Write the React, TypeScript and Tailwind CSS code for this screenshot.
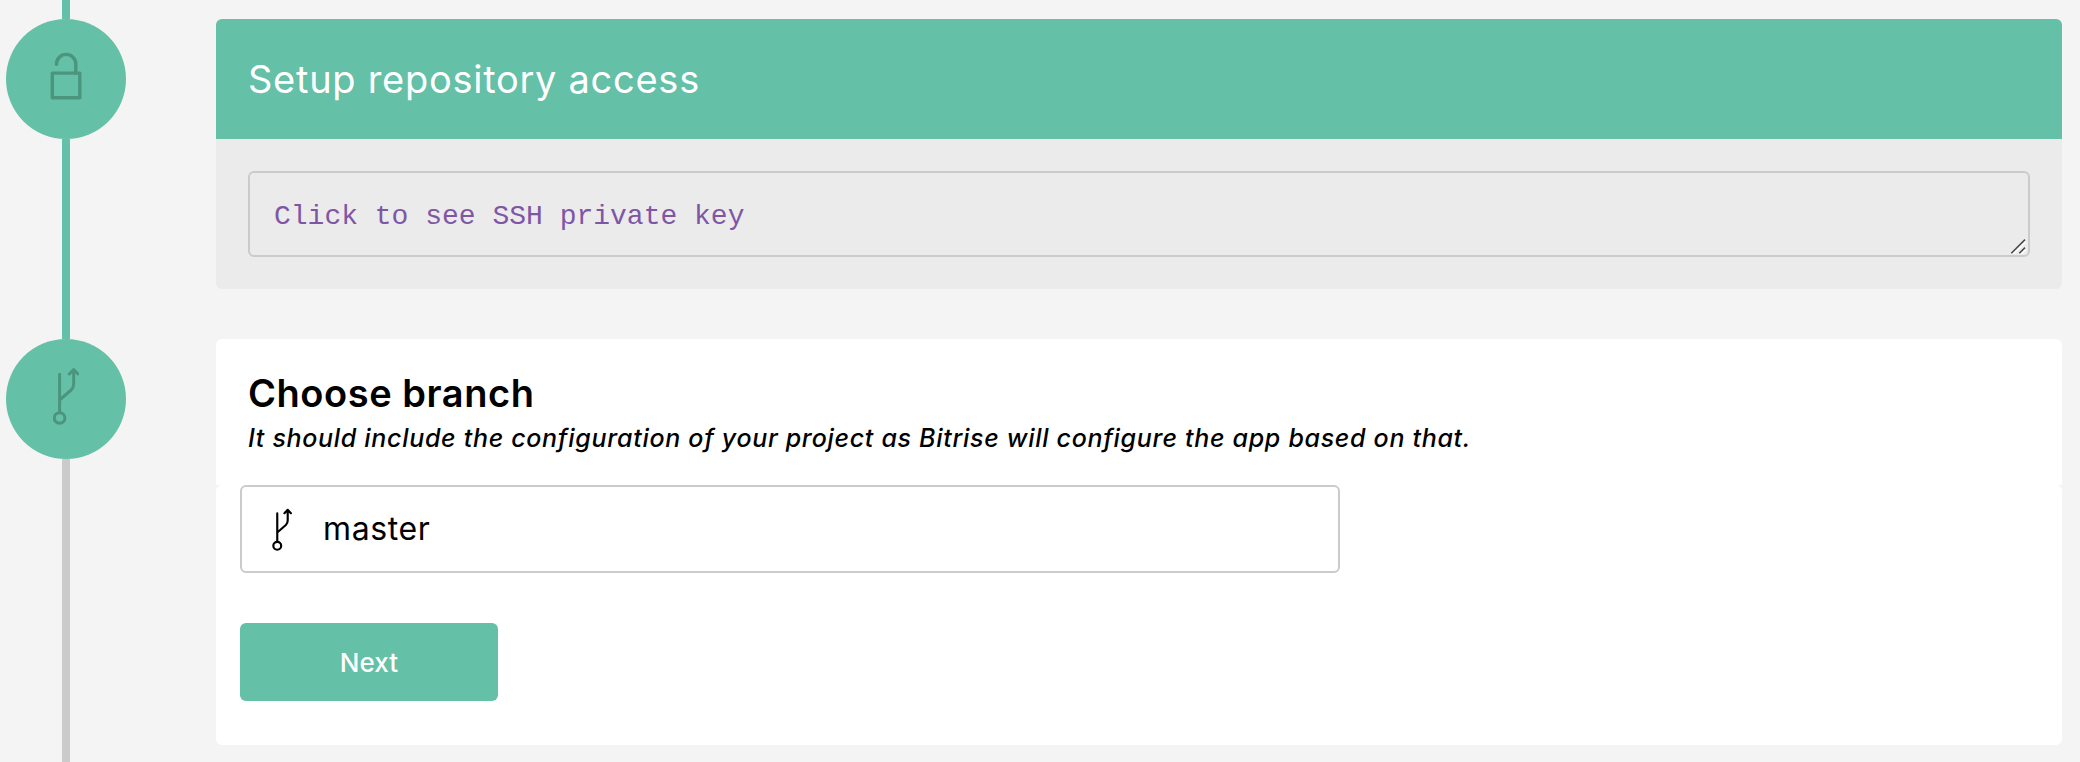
import React from "react";

function UnlockIcon() {
  return (
    <svg className="-mt-[7px]" width="32" height="48" viewBox="0 0 32 48" fill="none" stroke="#4b957d" strokeLinecap="round" strokeLinejoin="round">
      <rect x="2.3" y="21.1" width="27.5" height="24.7" strokeWidth="3.4" />
      <path d="M6.5 12.4V12a9.65 9.65 0 0 1 19.3 0v9" strokeWidth="3.4" />
    </svg>
  );
}

function BranchIcon({ className, strokeWidth }: { className: string; strokeWidth: number }) {
  return (
    <svg className={className} viewBox="0 0 26 58" fill="none" stroke="currentColor" strokeWidth={strokeWidth} strokeLinecap="round" strokeLinejoin="round">
      <circle cx="6.6" cy="51" r="5.3" />
      <path d="M6.6 45.5V7.3M6.6 33l11.6-10q2.5-2.5 2.5-6V2.7M16.3 7l4.4-4.5L25 7" />
    </svg>
  );
}

function ResizeGrip() {
  return (
    <svg className="absolute right-[2px] bottom-[1px]" width="16" height="16" viewBox="0 0 16 16" fill="none" strokeWidth="1.5">
      <path d="M3 16.5L16 3.5M11 16.5l5-5" stroke="#ffffff" />
      <path d="M1.3 15.3L15 1.6M9.3 15.3L15 9.6" stroke="#4a4a4a" />
    </svg>
  );
}

function StepCircle({ children }: { children: React.ReactNode }) {
  return (
    <div className="flex size-[120px] shrink-0 items-center justify-center rounded-full bg-[#64c0a6] text-[#4b957d]">
      {children}
    </div>
  );
}

export default function App() {
  return (
    <div className="flex h-[762px] w-[2080px] overflow-hidden bg-[#f4f4f4] pl-[6px] font-['Inter',sans-serif]">
      <div className="mr-[90px] flex w-[120px] shrink-0 flex-col items-center">
        <div className="h-[19px] w-2 bg-[#64c0a6]" />
        <StepCircle>
          <UnlockIcon />
        </StepCircle>
        <div className="h-[200px] w-2 bg-[#64c0a6]" />
        <StepCircle>
          <BranchIcon className="-mt-[6px] h-[58px] w-[26px]" strokeWidth={3} />
        </StepCircle>
        <div className="w-2 flex-1 bg-[#cbcbcb]" />
      </div>

      <main className="flex w-[1846px] flex-col gap-[50px] pt-[19px]">
        <section className="h-[270px] overflow-hidden rounded-[6px] bg-[#ebebeb]">
          <header className="flex h-[120px] items-center bg-[#64c0a6] pl-8 text-white">
            <h2 className="text-[38px] leading-[44px] tracking-[0.72px] whitespace-nowrap">Setup repository access</h2>
          </header>
          <div className="px-8 pt-8">
            <div className="relative flex h-[86px] items-center rounded-[6px] border-2 border-[#cbcbcb] pt-[5px] pl-6 font-['Liberation_Mono',monospace] text-[28px] text-[#7f56a6]">
              Click to see SSH private key
              <ResizeGrip />
            </div>
          </div>
        </section>

        <section className="flex flex-col">
          <header className="h-[146px] rounded-t-[6px] bg-white px-8 pt-[32px]">
            <h2 className="text-[38px] leading-[44px] font-semibold tracking-[0.55px] whitespace-nowrap">Choose branch</h2>
            <p className="mt-[5px] text-[25px] leading-[36px] font-medium tracking-[0.69px] whitespace-nowrap italic">
              It should include the configuration of your project as Bitrise will configure the app based on that.
            </p>
          </header>
          <div className="flex h-[260px] flex-col items-start rounded-[6px] bg-white pl-6">
            <div className="flex h-[88px] w-[1100px] items-center rounded-[6px] border-2 border-[#cbcbcb] pl-[30px]">
              <BranchIcon className="h-[43px] w-[20px]" strokeWidth={2.9} />
              <span className="ml-[31px] pb-[1px] text-[32px] tracking-[0.6px]">master</span>
            </div>
            <button className="mt-[50px] h-[78px] w-[258px] rounded-[6px] bg-[#64c0a6] text-[26px] font-medium tracking-[0.1px] text-white">Next</button>
          </div>
        </section>
      </main>
    </div>
  );
}
